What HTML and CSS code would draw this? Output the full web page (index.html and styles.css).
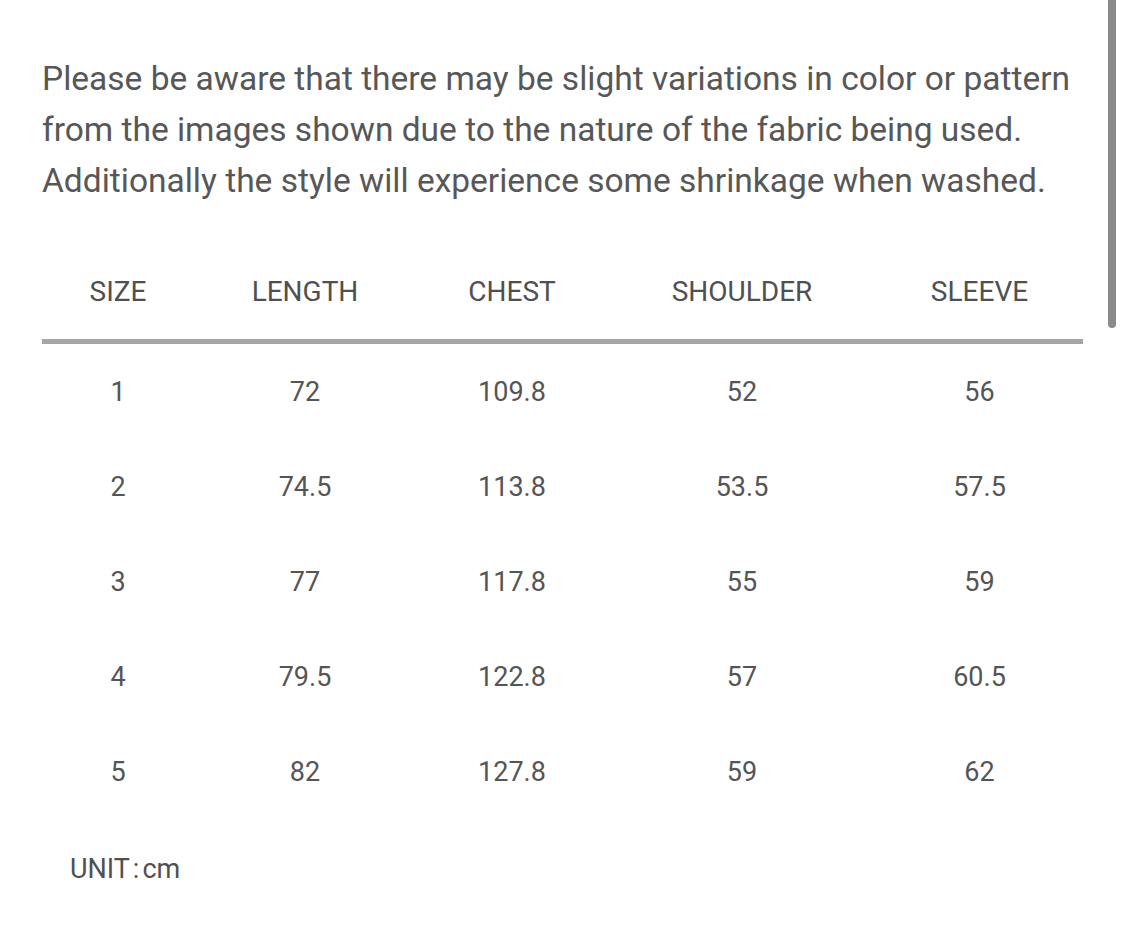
FILE: index.html
```html
<!DOCTYPE html>
<html>
<head>
<meta charset="utf-8">
<link rel="stylesheet" href="styles.css">
</head>
<body>
<div class="page">
  <p class="note">Please be aware that there may be slight variations in color or pattern from the images shown due to the nature of the fabric being used. Additionally the style will experience some shrinkage when washed.</p>
  <div class="table">
    <div class="row head">
      <div>SIZE</div><div>LENGTH</div><div>CHEST</div><div>SHOULDER</div><div>SLEEVE</div>
    </div>
    <div class="rule"></div>
    <div class="row"><div>1</div><div>72</div><div>109.8</div><div>52</div><div>56</div></div>
    <div class="row"><div>2</div><div>74.5</div><div>113.8</div><div>53.5</div><div>57.5</div></div>
    <div class="row"><div>3</div><div>77</div><div>117.8</div><div>55</div><div>59</div></div>
    <div class="row"><div>4</div><div>79.5</div><div>122.8</div><div>57</div><div>60.5</div></div>
    <div class="row"><div>5</div><div>82</div><div>127.8</div><div>59</div><div>62</div></div>
  </div>
  <div class="unit">UNIT<span class="colon">:</span>cm</div>
</div>
<div class="scrollbar"></div>
</body>
</html>
```
FILE: styles.css
```css
html, body {
  margin: 0;
  padding: 0;
  background: #ffffff;
}
body {
  width: 1125px;
  height: 948px;
  overflow: hidden;
  font-family: Roboto, "Liberation Sans", sans-serif;
  color: #555555;
}
.page {
  padding: 53px 42px 0 42px;
}
.note {
  margin: 0;
  font-size: 33.5px;
  line-height: 51px;
  width: 1045px;
  color: #575757;
}
.table {
  margin-top: 69px;
  width: 1041px;
}
.row {
  display: grid;
  grid-template-columns: 152px 222px 192px 268px 207px;
  height: 95px;
  align-items: center;
  font-size: 27px;
}
.row > div {
  text-align: center;
}
.head {
  height: 48px;
  align-items: start;
  font-size: 28px;
  color: #505050;
}
.rule {
  height: 5px;
  background: #a6a6a6;
  margin-top: 16px;
}
.unit {
  margin-top: 34px;
  margin-left: 28px;
  font-size: 27px;
  color: #505050;
}
.colon {
  margin: 0 3px;
}
.scrollbar {
  position: absolute;
  top: 0;
  left: 1108px;
  width: 8px;
  height: 328px;
  background: #8a8a8a;
  border-radius: 0 0 4px 4px;
}
```
